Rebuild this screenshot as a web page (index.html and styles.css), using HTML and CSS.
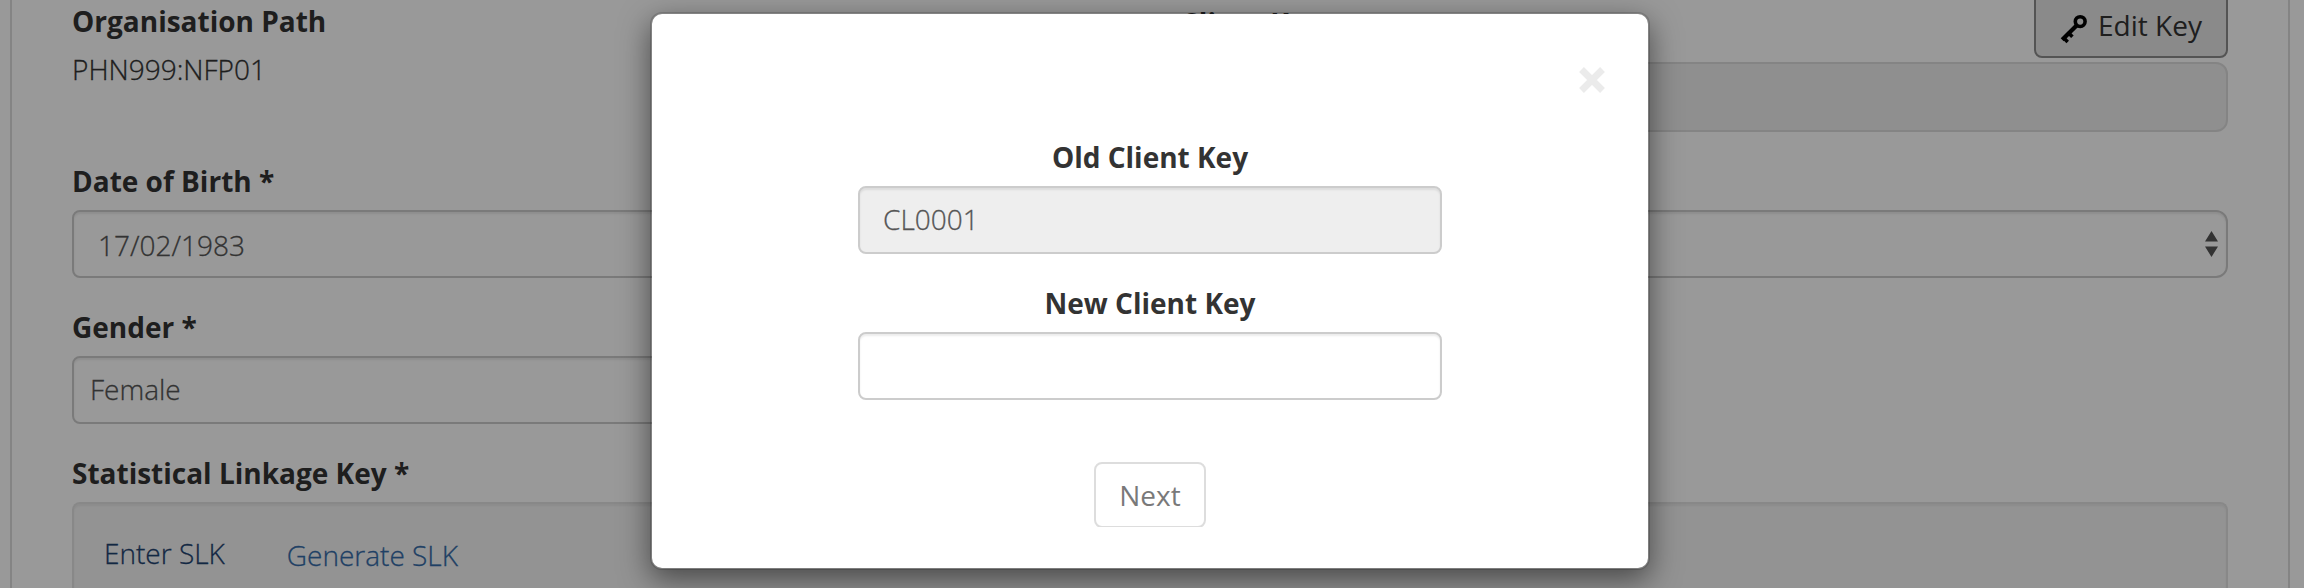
FILE: index.html
```html
<!DOCTYPE html>
<html lang="en">
<head>
<meta charset="utf-8">
<title>Edit Client Key</title>
<link rel="stylesheet" href="styles.css">
</head>
<body>
<main class="panel">
  <div class="columns">
    <section class="column">
      <div class="group group-path">
        <span class="label">Organisation Path</span>
        <p class="static">PHN999:NFP01</p>
      </div>
      <div class="group">
        <span class="label">Date of Birth *</span>
        <div class="field field-date">17/02/1983</div>
      </div>
      <div class="group">
        <span class="label">Gender *</span>
        <div class="field field-select">Female</div>
      </div>
    </section>
    <section class="column">
      <div class="group group-key">
        <div class="key-head">
          <span class="label key-label">Client Key</span>
          <button class="edit-button" type="button">
            <svg class="key-icon" viewBox="0 0 28 30"><circle cx="20.2" cy="7.6" r="4.9" fill="none" stroke="#000" stroke-width="3.6"/><path d="M16.6 11.4 2.2 25.8" fill="none" stroke="#000" stroke-width="4.2"/><path d="M8.8 19.2l3.6 3.6M3.8 24l3.9 3.9" fill="none" stroke="#000" stroke-width="3.6"/></svg>
            <span>Edit Key</span>
          </button>
        </div>
        <div class="key-value"></div>
      </div>
      <div class="group">
        <span class="label">&nbsp;</span>
        <div class="field field-arrows">
          <svg class="arrows" viewBox="0 0 13 26"><path d="M6.5 0 13 10.5H0zM6.5 26 13 15.5H0z" fill="#555"/></svg>
        </div>
      </div>
    </section>
  </div>
  <section class="linkage">
    <span class="label">Statistical Linkage Key *</span>
    <div class="well">
      <a class="tab tab-active">Enter SLK</a>
      <a class="tab">Generate SLK</a>
    </div>
  </section>
</main>
<div class="backdrop">
  <div class="dialog">
    <div class="dialog-head">
      <svg class="close" viewBox="0 0 26 26"><path d="M2.5 2.5l21 21M23.5 2.5l-21 21" fill="none" stroke="#ebebeb" stroke-width="6.8"/></svg>
    </div>
    <div class="dialog-body">
      <span class="label">Old Client Key</span>
      <div class="field field-readonly">CL0001</div>
      <span class="label label-next">New Client Key</span>
      <div class="field"></div>
      <div class="button-clip"><button class="next-button" type="button">Next</button></div>
    </div>
  </div>
</div>
</body>
</html>
```
FILE: styles.css
```css
* { box-sizing: border-box; }
body {
  position: relative;
  margin: 0;
  height: 588px;
  overflow: hidden;
  background: #fff;
  color: #333;
  font: 300 28px/40px "Open Sans", sans-serif;
}
.panel {
  height: 588px;
  margin: 0 14px 0 10px;
  padding: 0 60px;
  border: solid #ddd;
  border-width: 0 2px;
}
.columns {
  display: grid;
  grid-template-columns: 1fr 1fr;
  column-gap: 60px;
}
.group { margin-bottom: 28px; }
.group-path, .group-key { height: 132px; }
.label {
  display: block;
  height: 41px;
  padding-top: 1px;
  margin-bottom: 9px;
  font-weight: 700;
}
.key-label { padding: 3px 0 0 1px; }
.static { margin: -1px 0 0; }
.static, .field, .tab { -webkit-text-stroke: .3px currentColor; }
.field {
  display: flex;
  align-items: center;
  height: 68px;
  padding: 0 24px;
  border: 2px solid #ccc;
  border-radius: 8px;
  background: #fff;
  box-shadow: inset 0 2px 2px rgba(0, 0, 0, .075);
  color: #555;
}
.field-date { padding-top: 2px; }
.field-select { padding: 0 16px 2px; }
.field-arrows {
  justify-content: flex-end;
  padding: 0 8px;
  border-radius: 12px;
}
.arrows { width: 13px; height: 26px; }
.key-head {
  display: flex;
  justify-content: space-between;
  height: 62px;
}
.edit-button {
  display: flex;
  align-items: center;
  gap: 10px;
  width: 194px;
  height: 68px;
  margin-top: -10px;
  padding: 2px 22px 0 24px;
  border: 2px solid #8c8c8c;
  border-radius: 8px;
  background: #e6e6e6;
  color: #333;
  font: 400 28px/40px "Open Sans", sans-serif;
  white-space: nowrap;
}
.key-icon {
  flex: none;
  width: 28px;
  height: 30px;
  margin-top: 7px;
}
.key-value {
  height: 70px;
  border: 2px solid #ddd;
  border-radius: 12px;
  background: #eee;
}
.well {
  display: flex;
  height: 86px;
  padding: 29px 30px 0;
  gap: 62px;
  border: 2px solid #e3e3e3;
  border-bottom: 0;
  border-radius: 8px 8px 0 0;
  background: #f5f5f5;
  box-shadow: inset 0 2px 2px rgba(0, 0, 0, .05);
}
.tab { color: #356ba8; padding-top: 2px; }
.tab-active { color: #1f4370; padding-top: 0; }
.backdrop {
  position: absolute;
  inset: 0;
  display: flex;
  justify-content: center;
  align-items: flex-start;
  padding: 12px 4px 0 0;
  background: rgba(0, 0, 0, .4);
}
.dialog {
  width: 1000px;
  height: 558px;
  border: 2px solid rgba(0, 0, 0, .14);
  border-radius: 12px;
  background: #fff;
  background-clip: padding-box;
  box-shadow: 0 10px 30px rgba(0, 0, 0, .5);
}
.dialog-head {
  display: flex;
  justify-content: flex-end;
  height: 122px;
  padding: 53px 43px 0 0;
}
.close { width: 26px; height: 26px; }
.dialog-body {
  padding: 0 206px;
  text-align: center;
}
.field-readonly {
  padding: 0 23px 2px;
  background: #eee;
}
.label-next { margin-top: 28px; }
.button-clip {
  display: flex;
  justify-content: center;
  height: 65px;
  margin-top: 62px;
  overflow: hidden;
}
.next-button {
  width: 112px;
  height: 66px;
  padding: 0;
  border: 2px solid #ccc;
  border-radius: 8px;
  background: #fff;
  color: #333;
  font: 400 28px/40px "Open Sans", sans-serif;
  opacity: .65;
}
```
